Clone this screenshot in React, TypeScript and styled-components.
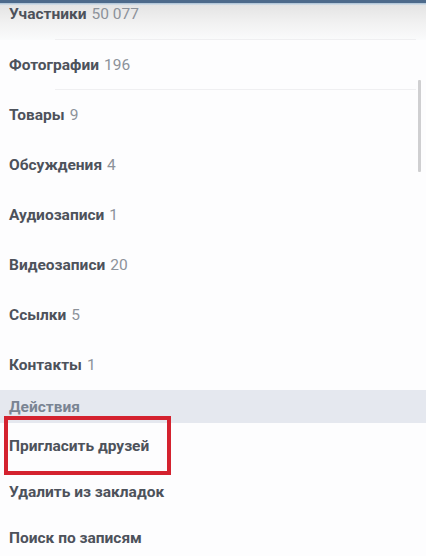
import React from "react";
import styled, { createGlobalStyle } from "styled-components";

const Global = createGlobalStyle`
  html, body { margin: 0; padding: 0; background: #fdfdfe; }
  body { font-family: Roboto, "Noto Sans", "Liberation Sans", sans-serif; }
  * { box-sizing: border-box; }
`;

const Screen = styled.div`
  position: relative;
  width: 426px;
  height: 556px;
  overflow: hidden;
  background: #fdfdfe;
  display: flex;
  flex-direction: column;
`;

const TopBar = styled.div`
  flex: none;
  height: 5px;
  background: linear-gradient(#4d6a8b 0, #4d6a8b 3px, #a9bfd3 3px, #d8e2ea 5px);
`;

const List = styled.div`
  display: flex;
  flex-direction: column;
`;

const Row = styled.div<{ $h: number; $top?: boolean }>`
  position: relative;
  flex: none;
  height: ${(p) => p.$h}px;
  display: flex;
  align-items: ${(p) => (p.$top ? "flex-end" : "center")};
  padding-left: 9px;
  padding-bottom: ${(p) => (p.$top ? "17px" : "0")};
  line-height: 18px;
  background: ${(p) => (p.$top ? "linear-gradient(#e4e4e4, #f1f1f1 50%, #fafbfc)" : "transparent")};
`;

const Divider = styled.div`
  position: absolute;
  left: 55px;
  right: 10px;
  bottom: 0;
  height: 1px;
  background: #efeff1;
`;

const Label = styled.span`
  font-size: 15.5px;
  font-weight: 700;
  color: #4d525b;
`;

const Count = styled.span`
  font-size: 15.5px;
  font-weight: 400;
  color: #8c929a;
  margin-left: 5px;
`;

const SectionHeader = styled.div`
  flex: none;
  height: 33px;
  display: flex;
  align-items: center;
  padding-left: 9px;
  background: #e5e8ef;
  font-size: 15.5px;
  font-weight: 700;
  color: #7a8493;
`;

const Highlight = styled.div`
  position: absolute;
  left: 4px;
  width: 167px;
  top: -7px;
  bottom: -6px;
  border: 4px solid #d4222f;
  pointer-events: none;
`;

const Scrollbar = styled.div`
  position: absolute;
  left: 418px;
  top: 80px;
  width: 3px;
  height: 92px;
  background: #cfcfd1;
  border-radius: 1px;
`;

const sections = [
  { label: "Участники", count: "50 077" },
  { label: "Фотографии", count: "196" },
  { label: "Товары", count: "9" },
  { label: "Обсуждения", count: "4" },
  { label: "Аудиозаписи", count: "1" },
  { label: "Видеозаписи", count: "20" },
  { label: "Ссылки", count: "5" },
  { label: "Контакты", count: "1" },
];

const actions = ["Пригласить друзей", "Удалить из закладок", "Поиск по записям"];

export default function App() {
  return (
    <Screen>
      <Global />
      <TopBar />
      <List>
        {sections.map((s, i) => (
          <Row key={s.label} $h={i === 0 ? 35 : 50} $top={i === 0}>
            <Label>{s.label}</Label>
            <Count>{s.count}</Count>
            {i < 2 && <Divider />}
          </Row>
        ))}
        <SectionHeader>Действия</SectionHeader>
        {actions.map((a, i) => (
          <Row key={a} $h={46}>
            <Label>{a}</Label>
            {i === 0 && <Highlight />}
          </Row>
        ))}
      </List>
      <Scrollbar />
    </Screen>
  );
}
